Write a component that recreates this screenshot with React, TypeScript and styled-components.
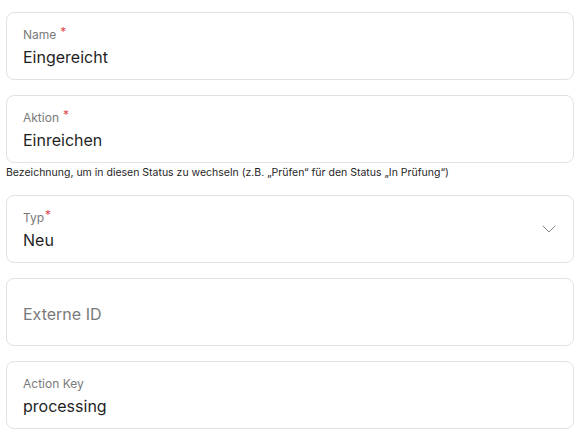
import styled, { createGlobalStyle } from 'styled-components';
import { ChevronDown } from 'lucide-react';

const GlobalStyle = createGlobalStyle`
  body {
    margin: 0;
    background: #ffffff;
    font-family: Inter, "Noto Sans", sans-serif;
    color: #1f1f1f;
  }
`;

const Form = styled.div`
  width: 568px;
  padding: 12px 0 0 6px;
  display: flex;
  flex-direction: column;
  gap: 15px;
`;

const FieldGroup = styled.div`
  display: flex;
  flex-direction: column;
`;

const Box = styled.div`
  box-sizing: border-box;
  height: 68px;
  border: 1px solid #e2e2e2;
  border-radius: 8px;
  padding: 14px 16px 9px 16px;
  display: flex;
  align-items: center;
  background: #fff;
`;

const BoxBody = styled.div`
  flex: 1;
  display: flex;
  flex-direction: column;
  gap: 2px;
  align-self: flex-start;
`;

const Label = styled.div`
  font-size: 12px;
  line-height: 16px;
  color: #7a7a7a;
`;

const Required = styled.span<{ $tight?: boolean }>`
  color: #e5484d;
  font-size: 12px;
  margin-left: ${(p) => (p.$tight ? '1px' : '4px')};
  position: relative;
  top: -3px;
`;

const Value = styled.div`
  font-size: 16px;
  line-height: 24px;
  color: #1f1f1f;
`;

const Placeholder = styled.div`
  font-size: 16px;
  line-height: 24px;
  color: #7a7a7a;
`;

const Helper = styled.div`
  font-size: 10.5px;
  line-height: 14px;
  color: #1f1f1f;
  margin-top: 3px;
`;

const Chevron = styled(ChevronDown)`
  color: #8a8a8a;
  margin-right: -4px;
  margin-top: -6px;
`;

const PlaceholderBox = styled(Box)`
  padding: 3px 16px 0 16px;
`;

interface FieldProps {
  label: string;
  value: string;
  required?: boolean;
  tight?: boolean;
}

const Field = ({ label, value, required, tight }: FieldProps) => (
  <BoxBody>
    <Label>
      {label}
      {required && <Required $tight={tight}>*</Required>}
    </Label>
    <Value>{value}</Value>
  </BoxBody>
);

export default function App() {
  return (
    <>
      <GlobalStyle />
      <Form>
        <Box>
          <Field label="Name" value="Eingereicht" required />
        </Box>
        <FieldGroup>
          <Box>
            <Field label="Aktion" value="Einreichen" required />
          </Box>
          <Helper>
            Bezeichnung, um in diesen Status zu wechseln (z.B. „Prüfen“ für den Status „In Prüfung“)
          </Helper>
        </FieldGroup>
        <Box>
          <Field label="Typ" value="Neu" required tight />
          <Chevron size={24} strokeWidth={1} />
        </Box>
        <PlaceholderBox>
          <Placeholder>Externe ID</Placeholder>
        </PlaceholderBox>
        <Box>
          <Field label="Action Key" value="processing" />
        </Box>
      </Form>
    </>
  );
}
